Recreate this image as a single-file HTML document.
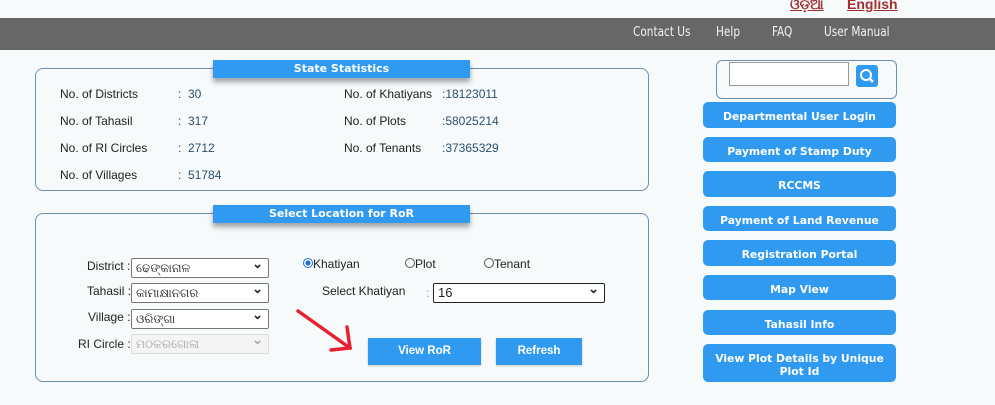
<!DOCTYPE html>
<html><head><meta charset="utf-8"><style>
*{box-sizing:border-box;margin:0;padding:0}
body{width:995px;height:405px;background:#f6fafa;font-family:"Liberation Sans",sans-serif;position:relative;overflow:hidden;font-size:12px;color:#222}
.a{position:absolute}
.bar{left:0;top:18px;width:995px;height:32px;background:#676767}
.nav{color:#f2f2f2;font-family:"Liberation Sans Narrow","DejaVu Sans Condensed",sans-serif;font-size:13px;top:25px;transform:scaleX(.9);transform-origin:left}
.lang{color:#a0302e;font-weight:bold;text-decoration:underline;font-size:14px;top:-4px}
.box{border:1px solid #6d8fb0;border-radius:8px}
.ttl{background:#2f9af0;color:#fff;font-weight:bold;font-size:11px;text-align:center;font-family:"DejaVu Sans",sans-serif;box-shadow:0 4px 5px rgba(0,0,0,.35);line-height:18px}
.lb{color:#222;font-size:12px}
.v{color:#2a4f6e;font-size:12px}
.btn{left:703px;width:193px;background:#2f9af0;color:#fff;border-radius:5px;font-family:"DejaVu Sans",sans-serif;font-weight:bold;font-size:10.8px;text-align:center;display:flex;align-items:center;justify-content:center;line-height:13px;padding-top:3px}
.sel{background:#fff;border:1px solid #777;border-radius:2px;height:20px;width:138px;left:131px;font-family:"Liberation Sans","Noto Sans CJK SC",sans-serif;font-size:12px;padding:2px 4px}
.sel:after{content:"⌄";position:absolute;right:5px;top:-3px;font-weight:bold;font-size:13px}
.b2{background:#2f9af0;color:#fff;font-weight:bold;font-size:11.5px;text-align:center;line-height:26px;box-shadow:0 1px 2px rgba(0,0,0,.2)}
</style></head><body>
<div class="a lang" style="left:790px">ଓଡ଼ିଆ</div>
<div class="a lang" style="left:847px">English</div>
<div class="a bar"></div>
<div class="a nav" style="left:633px">Contact Us</div>
<div class="a nav" style="left:716px">Help</div>
<div class="a nav" style="left:772px">FAQ</div>
<div class="a nav" style="left:824px">User Manual</div>

<div class="a box" style="left:35px;top:68px;width:614px;height:123px"></div>
<div class="a ttl" style="left:213px;top:60px;width:257px;height:18px">State Statistics</div>
<div class="a lb" style="left:60px;top:87px">No. of Districts</div><div class="a v" style="left:178px;top:87px">:&nbsp; 30</div>
<div class="a lb" style="left:60px;top:114px">No. of Tahasil</div><div class="a v" style="left:178px;top:114px">:&nbsp; 317</div>
<div class="a lb" style="left:60px;top:141px">No. of RI Circles</div><div class="a v" style="left:178px;top:141px">:&nbsp; 2712</div>
<div class="a lb" style="left:60px;top:168px">No. of Villages</div><div class="a v" style="left:178px;top:168px">:&nbsp; 51784</div>
<div class="a lb" style="left:344px;top:87px">No. of Khatiyans</div><div class="a v" style="left:442px;top:87px">:18123011</div>
<div class="a lb" style="left:344px;top:114px">No. of Plots</div><div class="a v" style="left:442px;top:114px">:58025214</div>
<div class="a lb" style="left:344px;top:141px">No. of Tenants</div><div class="a v" style="left:442px;top:141px">:37365329</div>

<div class="a box" style="left:35px;top:213px;width:614px;height:169px"></div>
<div class="a ttl" style="left:213px;top:205px;width:257px;height:18px">Select Location for RoR</div>
<div class="a lb" style="left:87px;top:259px">District :</div><div class="a sel" style="top:258px">ଢେଙ୍କାନାଳ</div>
<div class="a lb" style="left:87px;top:284px">Tahasil :</div><div class="a sel" style="top:283px">କାମାକ୍ଷାନଗର</div>
<div class="a lb" style="left:88px;top:310px">Village :</div><div class="a sel" style="top:309px">ଓରିଙ୍ଗା</div>
<div class="a lb" style="left:78px;top:337px">RI Circle :</div><div class="a sel" style="top:334px;background:#f4f4f4;border-color:#ddd;color:#aaa">ମଠକରଗୋଳା</div>
<div class="a lb" style="left:303px;top:257px"><span style="display:inline-block;width:10px;height:10px;border-radius:50%;border:1px solid #1a6fe0;background:radial-gradient(#1a6fe0 40%,#fff 50%);vertical-align:0"></span>Khatiyan</div>
<div class="a lb" style="left:405px;top:257px"><span style="display:inline-block;width:10px;height:10px;border-radius:50%;border:1px solid #555"></span>Plot</div>
<div class="a lb" style="left:484px;top:257px"><span style="display:inline-block;width:10px;height:10px;border-radius:50%;border:1px solid #555"></span>Tenant</div>
<div class="a lb" style="left:322px;top:284px">Select Khatiyan</div><div class="a v" style="left:426px;top:286px;color:#999">:</div>
<div class="a sel" style="left:433px;top:283px;width:172px;border:1.5px solid #222;font-size:13px;padding-top:1px">16</div>
<svg class="a" style="left:290px;top:300px" width="70" height="60"><g stroke="#e8202f" stroke-width="3.5" fill="none" stroke-linecap="round"><path d="M8 11 L60 48"/><path d="M57 27 L60 48 L41 50"/></g></svg>
<div class="a b2" style="left:368px;top:338px;width:113px;height:27px">View RoR</div>
<div class="a b2" style="left:496px;top:338px;width:86px;height:27px">Refresh</div>

<div class="a" style="left:716px;top:60px;width:181px;height:39px;border:1px solid #6d8fb0;border-radius:6px"></div>
<div class="a" style="left:729px;top:62px;width:120px;height:24px;background:#fff;border:1px solid #999"></div>
<div class="a" style="left:856px;top:65px;width:22px;height:22px;background:#2f9af0;border-radius:3px"><svg width="22" height="22"><circle cx="10" cy="10" r="5" stroke="#fff" stroke-width="2" fill="none"/><path d="M14 14 L17 17" stroke="#fff" stroke-width="2.5"/></svg></div>
<div class="a btn" style="top:102px;height:26px">Departmental User Login</div>
<div class="a btn" style="top:137px;height:25px">Payment of Stamp Duty</div>
<div class="a btn" style="top:171px;height:26px">RCCMS</div>
<div class="a btn" style="top:206px;height:25px">Payment of Land Revenue</div>
<div class="a btn" style="top:240px;height:26px">Registration Portal</div>
<div class="a btn" style="top:275px;height:25px">Map View</div>
<div class="a btn" style="top:310px;height:25px">Tahasil Info</div>
<div class="a btn" style="top:344px;height:38px">View Plot Details by Unique<br>Plot Id</div>
</body></html>
